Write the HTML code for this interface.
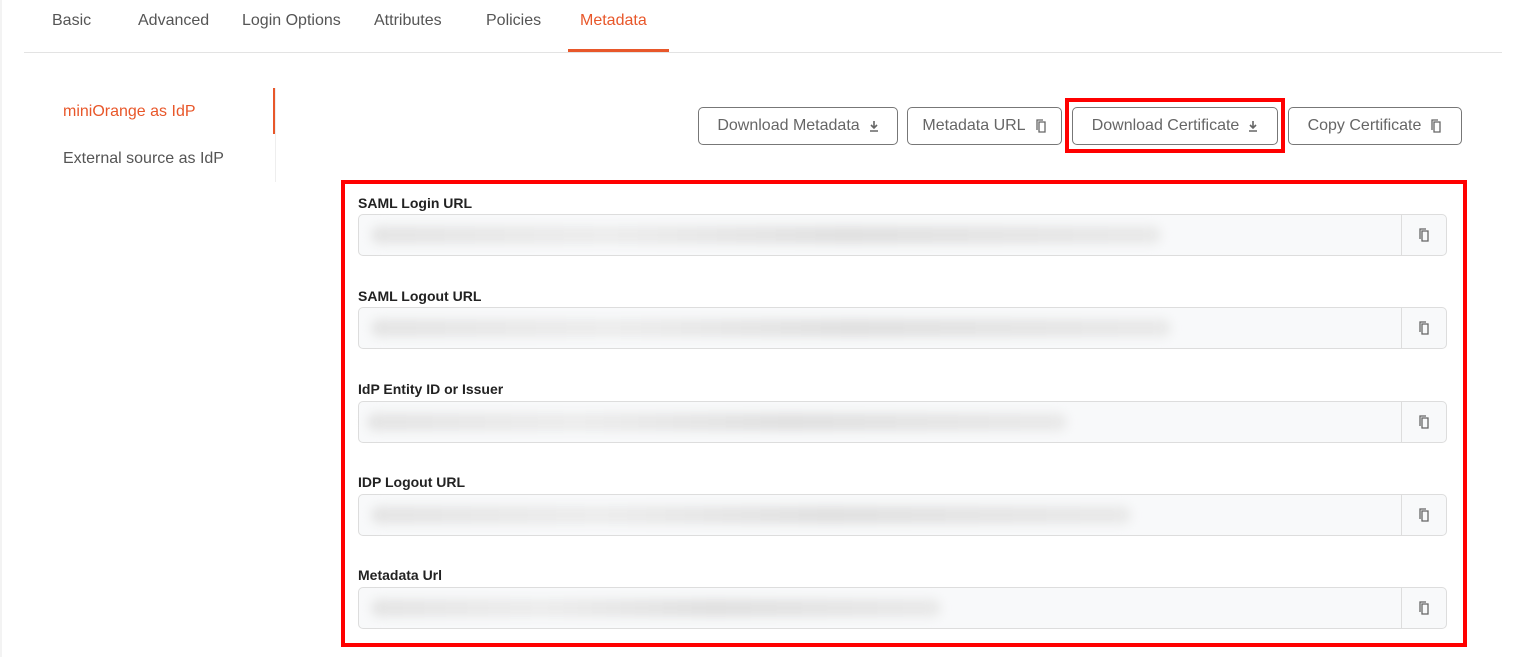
<!DOCTYPE html>
<html><head><style>
body{margin:0;width:1537px;height:657px;background:#fff;font-family:"Liberation Sans",sans-serif;position:relative;overflow:hidden}
.a{position:absolute}
.tab{position:absolute;top:12px;font-size:16px;color:#555}
.btn{position:absolute;top:107px;height:38px;border:1px solid #777;border-radius:5px;box-sizing:border-box;font-size:16px;color:#666;display:flex;align-items:center;justify-content:center;gap:9px}
.lbl{position:absolute;left:358px;font-size:14px;font-weight:bold;color:#222}
.inp{position:absolute;left:358px;width:1089px;height:42px;border:1px solid #ddd;border-radius:5px;background:#f8f9fa;box-sizing:border-box}
.inp .cp{position:absolute;right:0;top:0;width:44px;height:40px;border-left:1px solid #ddd;display:flex;align-items:center;justify-content:center}
.blur{position:absolute;left:12px;top:11px;height:18px;background:linear-gradient(90deg,#e4e4e4,#ececec 30%,#e0e0e0 60%,#e9e9e9);filter:blur(5px);border-radius:9px}
</style></head><body>
<div class="a" style="left:0;top:0;width:2px;height:657px;background:#f3f3f3"></div>
<div class="tab" style="left:52px">Basic</div>
<div class="tab" style="left:138px">Advanced</div>
<div class="tab" style="left:242px">Login Options</div>
<div class="tab" style="left:374px">Attributes</div>
<div class="tab" style="left:486px">Policies</div>
<div class="tab" style="left:580px;color:#e8572a">Metadata</div>
<div class="a" style="left:24px;top:52px;width:1478px;height:1px;background:#e3e3e3"></div>
<div class="a" style="left:568px;top:49px;width:101px;height:3px;background:#e8572a"></div>
<div class="a" style="left:63px;top:103px;font-size:16px;color:#e8572a">miniOrange as IdP</div>
<div class="a" style="left:63px;top:150px;font-size:16px;color:#555">External source as IdP</div>
<div class="a" style="left:275px;top:88px;width:1px;height:94px;background:#eee"></div>
<div class="a" style="left:273px;top:88px;width:2px;height:46px;background:#e8572a"></div>
<svg width="0" height="0" style="position:absolute"><defs>
<symbol id="dl" viewBox="0 0 10 12"><path d="M5 1v6M2 5l3 3 3-3M1 11h8" stroke="#666" stroke-width="1.6" fill="none"/></symbol>
<symbol id="cp" viewBox="0 0 12 14"><path d="M4 3h6v10H4z M2 11V1h6" stroke="#666" stroke-width="1.3" fill="none"/></symbol>
</defs></svg>
<div class="btn" style="left:698px;width:200px">Download Metadata <svg width="10" height="12"><use href="#dl"/></svg></div>
<div class="btn" style="left:907px;width:155px">Metadata URL <svg width="12" height="14"><use href="#cp"/></svg></div>
<div class="btn" style="left:1072px;width:206px">Download Certificate <svg width="10" height="12"><use href="#dl"/></svg></div>
<div class="btn" style="left:1288px;width:174px">Copy Certificate <svg width="12" height="14"><use href="#cp"/></svg></div>
<div class="a" style="left:1065px;top:98px;width:212px;height:47px;border:4px solid #f00"></div>
<div class="a" style="left:341px;top:180px;width:1118px;height:459px;border:4px solid #f00"></div>

<div class="lbl" style="top:195px">SAML Login URL</div>
<div class="inp" style="top:214px"><div class="blur" style="width:790px"></div><div class="cp"><svg width="12" height="14"><use href="#cp"/></svg></div></div>
<div class="lbl" style="top:288px">SAML Logout URL</div>
<div class="inp" style="top:307px"><div class="blur" style="width:800px"></div><div class="cp"><svg width="12" height="14"><use href="#cp"/></svg></div></div>
<div class="lbl" style="top:381px">IdP Entity ID or Issuer</div>
<div class="inp" style="top:401px"><div class="blur" style="width:700px;left:8px"></div><div class="cp"><svg width="12" height="14"><use href="#cp"/></svg></div></div>
<div class="lbl" style="top:474px">IDP Logout URL</div>
<div class="inp" style="top:494px"><div class="blur" style="width:760px"></div><div class="cp"><svg width="12" height="14"><use href="#cp"/></svg></div></div>
<div class="lbl" style="top:567px">Metadata Url</div>
<div class="inp" style="top:587px"><div class="blur" style="width:570px"></div><div class="cp"><svg width="12" height="14"><use href="#cp"/></svg></div></div>
</body></html>
